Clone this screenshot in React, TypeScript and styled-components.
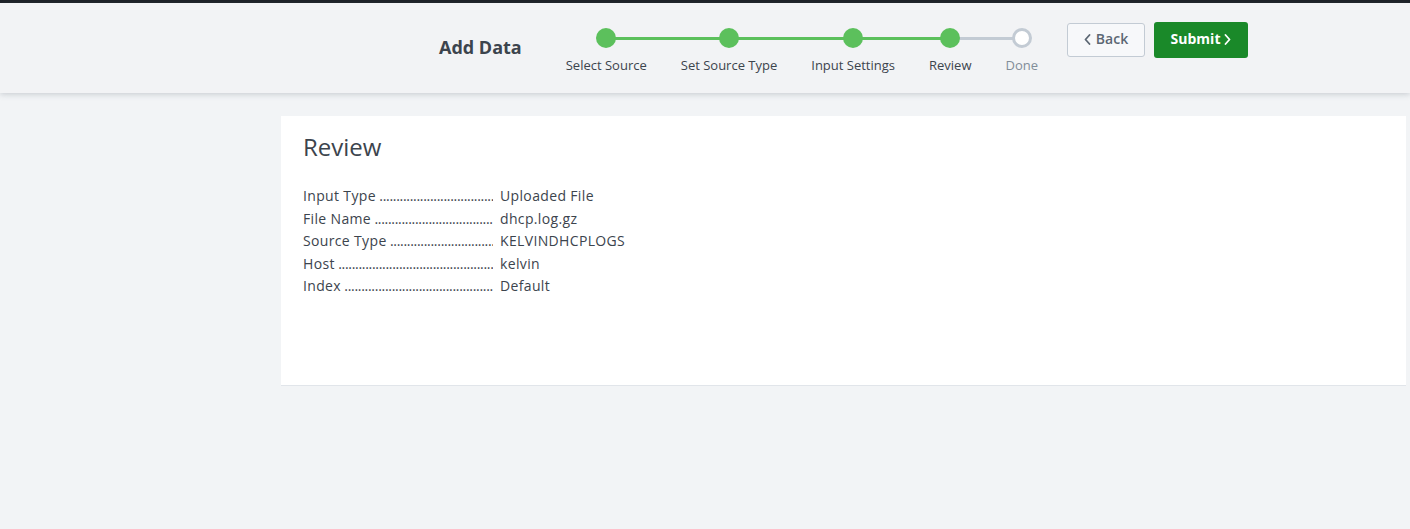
import React from "react";
import styled, { createGlobalStyle } from "styled-components";

const Global = createGlobalStyle`
  html, body { margin: 0; padding: 0; background: #f2f4f6; }
  body { font-family: "Open Sans", "Liberation Sans", sans-serif; color: #3c444d; }
  * { box-sizing: border-box; }
`;

const Page = styled.div`
  min-height: 529px;
  background: #f2f4f6;
  border-top: 3px solid #1c2026;
`;

const Header = styled.header`
  height: 90px;
  background: #f2f3f5;
  box-shadow: 0 1px 6px rgba(80, 90, 105, 0.28);
  display: grid;
  grid-template-columns: 281px 1fr 4px;
  position: relative;
  z-index: 1;
`;

const HeaderInner = styled.div`
  grid-column: 2;
  display: flex;
  justify-content: center;
  align-items: flex-start;
`;

const Title = styled.h1`
  margin: 32px 27px 0 0;
  font-size: 18px;
  font-weight: 700;
  line-height: 24px;
  color: #3c444d;
`;

const Steps = styled.ol`
  display: flex;
  list-style: none;
  margin: 0;
  padding: 0;
  padding-top: 25px;
`;

const Step = styled.li<{ $leftColor?: string; $rightColor?: string }>`
  position: relative;
  padding: 0 17px;
  display: flex;
  flex-direction: column;
  align-items: center;

  &::before, &::after {
    content: "";
    position: absolute;
    top: 9px;
    height: 3px;
  }
  &::before {
    left: 0;
    right: 50%;
    background: ${(p) => p.$leftColor ?? "transparent"};
  }
  &::after {
    left: 50%;
    right: 0;
    background: ${(p) => p.$rightColor ?? "transparent"};
  }
`;

const Dot = styled.span<{ $done: boolean }>`
  position: relative;
  z-index: 1;
  width: 20px;
  height: 20px;
  border-radius: 50%;
  background: ${(p) => (p.$done ? "#5cc05c" : "#ffffff")};
  border: ${(p) => (p.$done ? "none" : "3px solid #c3cbd4")};
`;

const StepLabel = styled.span<{ $done: boolean }>`
  margin-top: 9px;
  font-size: 13px;
  line-height: 16px;
  white-space: nowrap;
  color: ${(p) => (p.$done ? "#3c444d" : "#818d99")};
`;

const Buttons = styled.div`
  display: flex;
  align-items: center;
  gap: 9px;
  margin-left: 12px;
  margin-top: 19px;
`;

const BackButton = styled.button`
  height: 34px;
  width: 78px;
  border: 1px solid #c3cbd4;
  border-radius: 3px;
  background: #f7f8fa;
  color: #5c6773;
  font-family: inherit;
  font-size: 14px;
  font-weight: 600;
  line-height: 16px;
  display: flex;
  align-items: center;
  justify-content: center;
  gap: 5px;
  padding: 0 0 2px;
`;

const SubmitButton = styled.button`
  height: 36px;
  width: 94px;
  border: none;
  border-radius: 3px;
  background: #1a8929;
  color: #ffffff;
  font-family: inherit;
  font-size: 14px;
  font-weight: 700;
  line-height: 16px;
  display: flex;
  align-items: center;
  justify-content: center;
  gap: 4px;
  padding: 0 0 2px;
`;

const Body = styled.main`
  display: grid;
  grid-template-columns: 281px 1fr 4px;
  padding-top: 23px;
`;

const Panel = styled.section`
  grid-column: 2;
  height: 270px;
  background: #ffffff;
  border-bottom: 1px solid #e1e5ea;
  padding: 16px 22px;
`;

const PanelTitle = styled.h2`
  margin: 0 0 23px 0;
  font-size: 24px;
  font-weight: 400;
  line-height: 30px;
  color: #3c444d;
`;

const Rows = styled.dl`
  margin: 0;
  display: grid;
  grid-template-columns: 190px auto;
  column-gap: 7px;
  row-gap: 0;
  font-size: 14px;
  line-height: 22.5px;
  letter-spacing: 0.35px;
`;

const Key = styled.dt`
  overflow: hidden;
  white-space: nowrap;
  &::after {
    content: " ..............................................................................................";
    letter-spacing: -0.3px;
  }
`;

const Value = styled.dd`
  margin: 0;
  white-space: nowrap;
`;

const Chevron = ({ dir }: { dir: "left" | "right" }) => (
  <svg width="7" height="11" viewBox="0 0 7 11" fill="none">
    <path
      d={dir === "left" ? "M5.5 1 L1.5 5.5 L5.5 10" : "M1.5 1 L5.5 5.5 L1.5 10"}
      stroke="currentColor"
      strokeWidth="1.8"
      strokeLinecap="round"
      strokeLinejoin="round"
    />
  </svg>
);

const steps = [
  { label: "Select Source", done: true },
  { label: "Set Source Type", done: true },
  { label: "Input Settings", done: true },
  { label: "Review", done: true },
  { label: "Done", done: false },
];

const rows = [
  ["Input Type", "Uploaded File"],
  ["File Name", "dhcp.log.gz"],
  ["Source Type", "KELVINDHCPLOGS"],
  ["Host", "kelvin"],
  ["Index", "Default"],
];

export default function App() {
  return (
    <>
      <Global />
      <Page>
        <Header>
          <HeaderInner>
            <Title>Add Data</Title>
            <Steps>
              {steps.map((s, i) => {
                const lineColor = (next: boolean) => (next ? "#5cc05c" : "#c3cbd4");
                const left = i > 0 ? lineColor(s.done) : undefined;
                const right = i < steps.length - 1 ? lineColor(steps[i + 1].done) : undefined;
                return (
                  <Step key={s.label} $leftColor={left} $rightColor={right}>
                    <Dot $done={s.done} />
                    <StepLabel $done={s.done}>{s.label}</StepLabel>
                  </Step>
                );
              })}
            </Steps>
            <Buttons>
              <BackButton>
                <Chevron dir="left" />
                Back
              </BackButton>
              <SubmitButton>
                Submit
                <Chevron dir="right" />
              </SubmitButton>
            </Buttons>
          </HeaderInner>
        </Header>
        <Body>
          <Panel>
            <PanelTitle>Review</PanelTitle>
            <Rows>
              {rows.map(([k, v]) => (
                <React.Fragment key={k}>
                  <Key>{k}</Key>
                  <Value>{v}</Value>
                </React.Fragment>
              ))}
            </Rows>
          </Panel>
        </Body>
      </Page>
    </>
  );
}
